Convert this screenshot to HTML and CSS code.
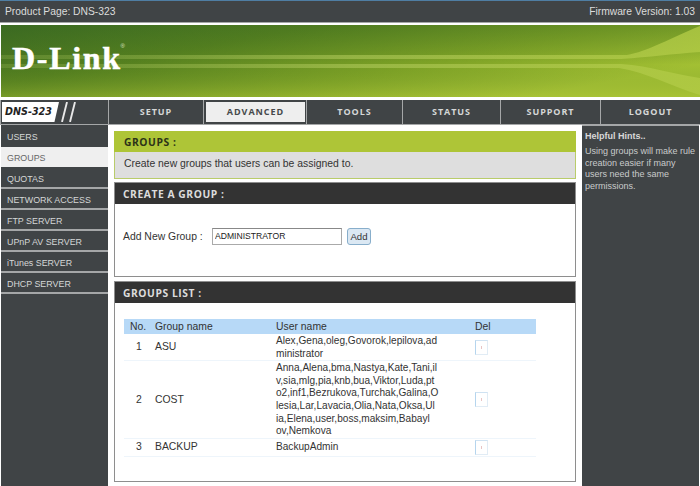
FILE: index.html
```html
<!DOCTYPE html>
<html lang="en">
<head>
<meta charset="utf-8">
<title>D-Link DNS-323 Groups</title>
<link rel="stylesheet" href="styles.css">
</head>
<body>
<header class="topbar">
  <span>Product Page: DNS-323</span>
  <span>Firmware Version: 1.03</span>
</header>
<div class="banner">
  <svg class="banner-art" viewBox="0 0 699 72" preserveAspectRatio="none" aria-hidden="true">
    <defs>
      <linearGradient id="bg" x1="0" y1="0" x2="1" y2="0.55">
        <stop offset="0" stop-color="#3b6a22"/>
        <stop offset="0.35" stop-color="#55801f"/>
        <stop offset="0.7" stop-color="#7fa326"/>
        <stop offset="1" stop-color="#a3c033"/>
      </linearGradient>
      <linearGradient id="shade" x1="0" y1="0" x2="0" y2="1">
        <stop offset="0" stop-color="#3b6a22" stop-opacity="0.28"/>
        <stop offset="0.55" stop-color="#3b6a22" stop-opacity="0"/>
        <stop offset="1" stop-color="#b4c93a" stop-opacity="0.3"/>
      </linearGradient>
      <linearGradient id="stripe" x1="0" y1="0" x2="1" y2="0">
        <stop offset="0" stop-color="#8fb04e" stop-opacity="0.3"/>
        <stop offset="0.5" stop-color="#a9c455" stop-opacity="0.65"/>
        <stop offset="1" stop-color="#b2cb45" stop-opacity="0.8"/>
      </linearGradient>
    </defs>
    <rect width="699" height="72" fill="url(#bg)"/>
    <rect width="699" height="72" fill="url(#shade)"/>
    <path d="M0 30H626C645 27 672 12 699 1V27C670 29 650 32 620 34H0Z" fill="url(#stripe)"/>
    <path d="M0 39H620C650 41 675 50 699 53V70C672 62 645 47 618 43H0Z" fill="url(#stripe)"/>
  </svg>
  <div class="logo">D-Link<sup class="reg">®</sup></div>
</div>
<nav class="nav">
  <div class="nav-brand">
    <span class="brand-tag">DNS-323</span>
    <svg class="brand-slashes" viewBox="0 0 20 20" aria-hidden="true"><path d="M6 0 1 20M14 0 9 20" stroke="#e8e8e8" stroke-width="1.9" fill="none"/></svg>
  </div>
  <a class="nav-item">SETUP</a>
  <a class="nav-item active">ADVANCED</a>
  <a class="nav-item">TOOLS</a>
  <a class="nav-item">STATUS</a>
  <a class="nav-item">SUPPORT</a>
  <a class="nav-item">LOGOUT</a>
</nav>
<main class="main">
  <aside class="sidebar">
    <a class="side-item plain">USERS</a>
    <a class="side-item current">GROUPS</a>
    <a class="side-item">QUOTAS</a>
    <a class="side-item">NETWORK ACCESS</a>
    <a class="side-item">FTP SERVER</a>
    <a class="side-item">UPnP AV SERVER</a>
    <a class="side-item">iTunes SERVER</a>
    <a class="side-item">DHCP SERVER</a>
  </aside>
  <section class="content">
    <div class="intro">
      <h2 class="intro-title">GROUPS :</h2>
      <p class="intro-text">Create new groups that users can be assigned to.</p>
    </div>
    <div class="panel create">
      <h2 class="panel-title">CREATE A GROUP :</h2>
      <form class="add-form">
        <label class="add-label" for="group">Add New Group :</label>
        <input class="add-input" id="group" type="text" value="ADMINISTRATOR">
        <button class="add-btn" type="button">Add</button>
      </form>
    </div>
    <div class="panel list">
      <h2 class="panel-title">GROUPS LIST :</h2>
      <table class="groups">
        <thead>
          <tr><th class="c-no">No.</th><th class="c-group">Group name</th><th class="c-user">User name</th><th class="c-del">Del</th></tr>
        </thead>
        <tbody>
          <tr>
            <td class="c-no">1</td><td class="c-group">ASU</td>
            <td class="c-user">Alex,Gena,oleg,Govorok,lepilova,ad<br>ministrator</td>
            <td class="c-del"><span class="del"><i></i></span></td>
          </tr>
          <tr>
            <td class="c-no">2</td><td class="c-group">COST</td>
            <td class="c-user">Anna,Alena,bma,Nastya,Kate,Tani,il<br>v,sia,mlg,pia,knb,bua,Viktor,Luda,pt<br>o2,inf1,Bezrukova,Turchak,Galina,O<br>lesia,Lar,Lavacia,Olia,Nata,Oksa,Ul<br>ia,Elena,user,boss,maksim,Babayl<br>ov,Nemkova</td>
            <td class="c-del"><span class="del"><i></i></span></td>
          </tr>
          <tr>
            <td class="c-no">3</td><td class="c-group">BACKUP</td>
            <td class="c-user">BackupAdmin</td>
            <td class="c-del"><span class="del"><i></i></span></td>
          </tr>
        </tbody>
      </table>
    </div>
  </section>
  <aside class="hints">
    <h3 class="hints-title">Helpful Hints..</h3>
    <p class="hints-text">Using groups will make rule creation easier if many users need the same permissions.</p>
  </aside>
</main>
</body>
</html>
```
FILE: styles.css
```css
html, body { margin: 0; padding: 0; height: 486px; overflow: hidden; background: #fff; }
body { font-family: "Liberation Sans", Arial, sans-serif; color: #333; }
h2, h3, p { margin: 0; }

.topbar {
  display: flex; justify-content: space-between; align-items: center;
  height: 21px; padding: 0 5px;
  background: #404446; color: #dcdcdc; font-size: 10.3px;
  border-top: 1px solid #4f7ea3; border-bottom: 1px solid #a5a7a8;
}
.banner { position: relative; height: 72px; margin: 2px 0 3px 1px; }
.banner-art { display: block; width: 100%; height: 72px; }
.logo {
  position: absolute; left: 11px; top: 15px;
  font-family: "Liberation Serif", serif; font-weight: 700; font-size: 32px; line-height: 36px;
  letter-spacing: 1.7px; color: #fff; -webkit-text-stroke: 0.5px #fff;
}
.reg { position: absolute; top: 2px; right: -3px; font-size: 6px; line-height: 8px; letter-spacing: 0; color: #dfe8c8; font-weight: 400; font-family: "Liberation Sans", sans-serif; -webkit-text-stroke: 0; }

.nav {
  display: grid; grid-template-columns: 107px 94px 102px 95px 97px 99px 99px;
  column-gap: 1px; height: 24px; padding-left: 1px; background: #a5a7a8;
  border-bottom: 1px solid #a5a7a8;
}
.nav-brand { display: flex; align-items: center; gap: 2px; background: #404446; padding: 2px 0 2px 1px; }
.brand-tag {
  display: block; width: 57px; height: 20px; line-height: 20px; padding-left: 3px; box-sizing: border-box;
  background: #fff; color: #222;
  clip-path: polygon(0 0, 100% 0, 92% 100%, 0 100%);
  font-family: "DejaVu Sans", sans-serif; font-style: italic; font-weight: 700; font-size: 9.6px;
}
.brand-slashes { width: 20px; height: 20px; }
.nav-item {
  display: flex; align-items: center; justify-content: center; padding-bottom: 1px; box-sizing: border-box;
  background: #404446; color: #d5d7d7;
  font-family: "Open Sans", sans-serif; font-weight: 700; font-size: 9px; letter-spacing: 0.95px;
}
.nav-item.active {
  background: #eeeeee; color: #46494b;
  border: 2px solid #404446; border-right-width: 1px;
}

.main { display: grid; grid-template-columns: 107px 462px 117px; column-gap: 6px; height: 361px; padding-left: 1px; }

.sidebar { background: #404446; padding-top: 1px; }
.side-item {
  display: block; box-sizing: border-box; height: 21px; line-height: 23px; padding-left: 6px;
  color: #d5d7d7; font-size: 8.9px; border-bottom: 2px solid #a5a7a8;
}
.side-item.plain { border-bottom-color: transparent; }
.side-item.current { background: #efefef; color: #666; border-bottom: 1px solid #404446; }

.content { display: flex; flex-direction: column; padding-top: 6px; }
.intro { background: #dedede; border: 1px solid #b9cc6a; border-top: 0; height: 48px; box-sizing: border-box; }
.intro-title {
  height: 21px; margin: 0 -1px; padding-left: 10px; line-height: 23px;
  background: #aec537; color: #2c3318;
  font-family: "Open Sans", sans-serif; font-weight: 700; font-size: 10.3px; letter-spacing: 0.55px;
}
.intro-text { padding-left: 9px; line-height: 24px; font-size: 10.4px; color: #333; }

.panel { background: #fff; border: 1px solid #8e8e8e; box-sizing: border-box; }
.panel-title {
  height: 21px; padding-left: 8px; line-height: 23px;
  background: #333333; color: #dcdcdc;
  font-family: "Open Sans", sans-serif; font-weight: 700; font-size: 10.3px; letter-spacing: 0.55px;
}
.create { height: 95px; margin-top: 3px; }
.list { height: 201px; margin-top: 4px; }

.add-form { display: flex; align-items: center; height: 20px; margin: 22px 0 0 8px; }
.add-label { width: 89px; font-size: 10.4px; color: #333; }
.add-input {
  width: 130px; height: 17px; box-sizing: border-box; margin: 0 5px 0 0; padding: 0 2px;
  border: 1px solid #aaa; border-top-color: #888; background: #fff; color: #222;
  font-family: "Liberation Sans", sans-serif; font-size: 8.6px;
}
.add-btn {
  width: 24px; height: 17px; padding: 0; box-sizing: border-box;
  border: 1px solid #88aecb; border-radius: 3px; background: #dbe8f3; color: #333;
  font-family: "Liberation Sans", sans-serif; font-size: 9.6px;
}

.groups { width: 412px; margin: 16px 0 0 9px; border-collapse: collapse; table-layout: fixed; font-size: 10.4px; color: #333; }
.groups th { height: 15px; padding: 0; background: #b7d9f7; font-weight: 400; text-align: left; line-height: 15px; }
.groups td { padding: 1px 0 0; line-height: 12.6px; border-bottom: 1px solid #eef5fb; vertical-align: middle; }
.c-no { width: 31px; }
.groups th.c-no { padding-left: 6px; box-sizing: border-box; }
.groups td.c-no { padding-left: 12px; box-sizing: border-box; }
.c-group { width: 121px; }
.c-user { width: 199px; }
.groups td.c-user { padding-right: 30px; box-sizing: border-box; font-size: 10.1px; }
.del {
  display: flex; align-items: center; justify-content: center; box-sizing: border-box;
  width: 13px; height: 15px; margin-bottom: 1px;
  border: 1px solid #e1ecf5; border-left-color: #b5d5ee; border-top-color: #cfe2f2; background: #fff;
}
.del i { display: block; width: 1px; height: 3px; background: #e9c4c4; }

.hints { background: #404446; border-top: 1px solid #a5a7a8; padding: 4px 0 4px 3px; color: #c9cbcb; font-size: 9px; line-height: 11.7px; }
.hints-title { font-size: 9px; font-weight: 700; color: #d8d8d8; line-height: 12px; margin-bottom: 4px; }
```
